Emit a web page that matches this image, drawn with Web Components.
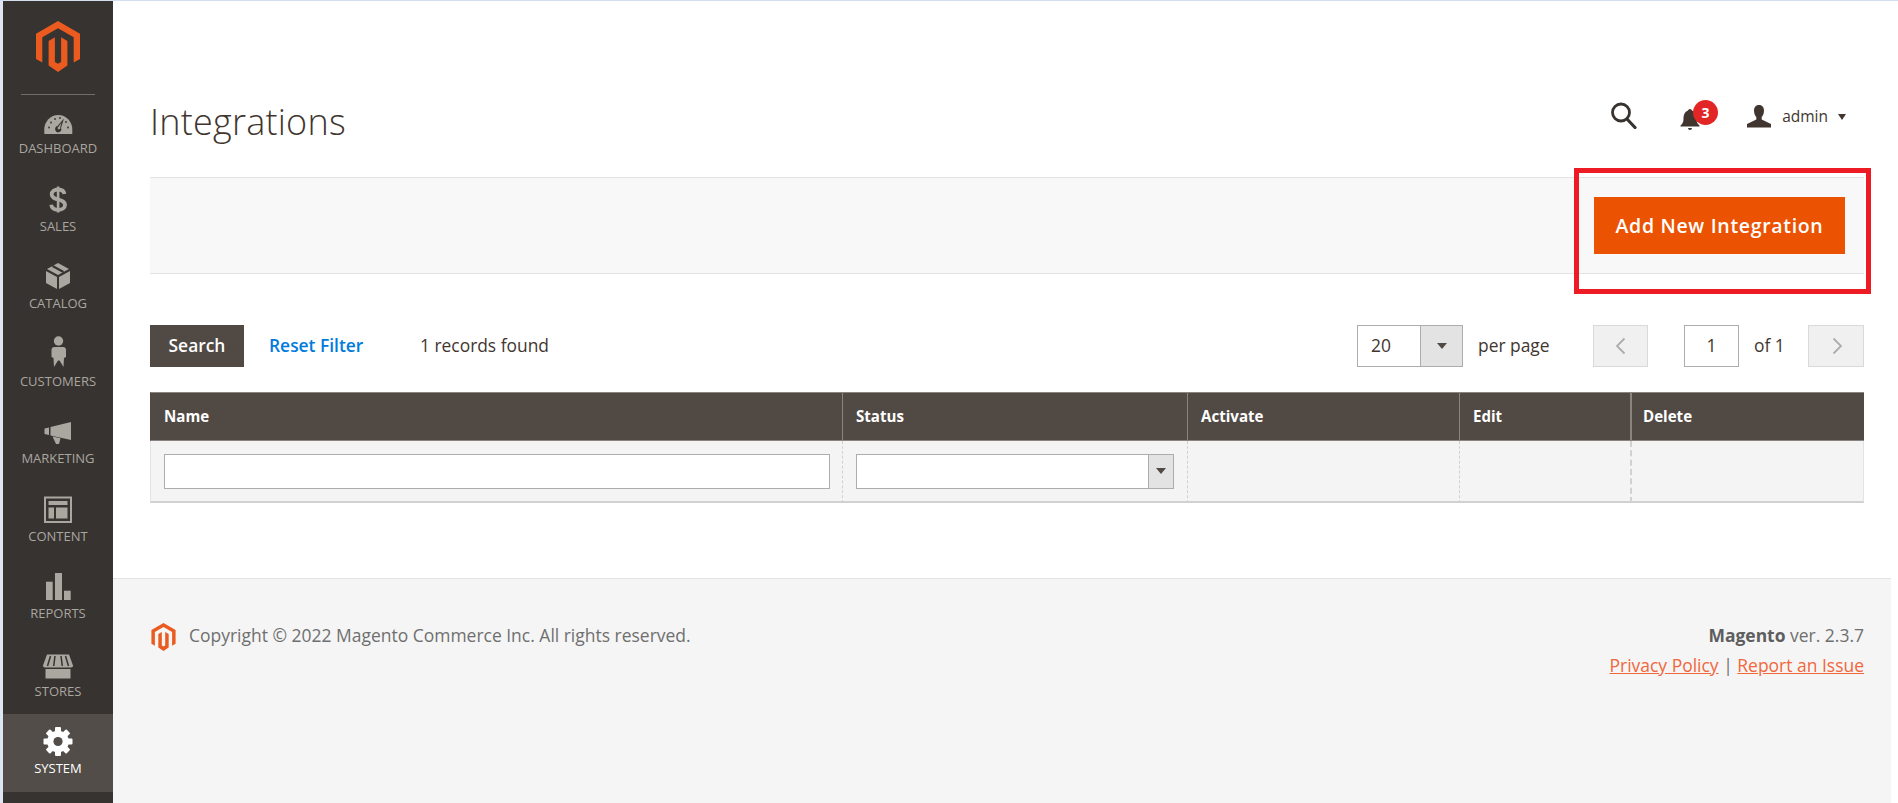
<!DOCTYPE html>
<html lang="en">
<head>
<meta charset="utf-8">
<title>Integrations</title>
<style>
html,body{margin:0;padding:0;height:100%;background:#fff;font-family:"Open Sans","Liberation Sans",sans-serif;color:#41362f}
</style>
</head>
<body>
<admin-shell>
  <admin-nav slot="nav">
    <nav-item label="Dashboard"><svg viewBox="0 0 40 40" width="40" height="40"><path fill="currentColor" d="M6.3 33v-4.5a14 14.5 0 0 1 28 0V33z"/><g fill="#373330"><circle cx="11" cy="26.5" r=".9"/><circle cx="13" cy="21.5" r=".9"/><circle cx="17" cy="18" r=".9"/><circle cx="22" cy="17" r=".9"/><circle cx="30" cy="26.5" r=".9"/><circle cx="28" cy="21" r=".9"/><path d="M17.5 29.5a3 3 0 0 1 2-4.5l6.5-7.5-3 9.5a3 3 0 0 1-5.5 2.500z"/></g><path fill="currentColor" d="M20.500 25.800l3-4-1.300 4.800a1.300 1.300 0 1 1-1.700-.8z"/></svg></nav-item>
    <nav-item label="Sales"><svg viewBox="0 0 40 40" width="40" height="40"><path fill="none" stroke="currentColor" stroke-width="3.800" d="M26.500 15c-.5-3-3-4.500-6.500-4.500s-6.300 1.800-6.300 5c0 6.500 13.300 3.500 13.300 10.500 0 3-3 4.800-6.800 4.800-3.700 0-6.500-1.700-7-5"/><rect x="18.800" y="7.500" width="2.600" height="26" fill="currentColor"/></svg></nav-item>
    <nav-item label="Catalog"><svg viewBox="0 0 40 40" width="40" height="40"><g fill="currentColor"><path d="M8 15l11 6v12L8 27z"/><path d="M32 15l-11 6v12l11-6z"/><path d="M20 7l11 6-11 6-11-6z"/></g><path stroke="#373330" stroke-width="2" d="M14.500 10l11 6"/></svg></nav-item>
    <nav-item label="Customers"><svg viewBox="0 0 40 40" width="40" height="40"><g fill="currentColor"><circle cx="20.500" cy="7" r="4.700"/><path d="M16 13h9q3 0 3 3v7l-2 1-.5 9-4-6.500h-1.500l-4 6.500-.5-9-2-1v-7q0-3 3-3z"/></g></svg></nav-item>
    <nav-item label="Marketing"><svg viewBox="0 0 40 40" width="40" height="40"><g fill="currentColor"><path d="M6.500 17.500l4.500-1v7.500l-4.500-1z"/><path d="M12.500 16L33 11v18l-20.500-4.500z"/><path d="M14.500 25.500l8 1.800-1.500 5.700h-3z"/></g></svg></nav-item>
    <nav-item label="Content"><svg viewBox="0 0 40 40" width="40" height="40"><rect x="7" y="8.500" width="26" height="24.500" fill="none" stroke="currentColor" stroke-width="2"/><g fill="currentColor"><rect x="10.500" y="12" width="19" height="4"/><rect x="10.500" y="18.500" width="5.500" height="11"/><rect x="18" y="18.500" width="11.500" height="11"/></g></svg></nav-item>
    <nav-item label="Reports"><svg viewBox="0 0 40 40" width="40" height="40"><g fill="currentColor"><rect x="8" y="15.700" width="6.700" height="18.300"/><rect x="17" y="7" width="7" height="27"/><rect x="26" y="24.700" width="6.700" height="9.300"/></g></svg></nav-item>
    <nav-item label="Stores"><svg viewBox="0 0 40 40" width="40" height="40"><g fill="currentColor"><path d="M9 10.500h22l4 11q.3 2-2 2H7q-2.300 0-2-2z"/><path d="M7.500 25h25v9.500h-25z"/></g><path stroke="#373330" stroke-width="1.500" fill="none" d="M12.500 12l-3 10M17 12l-1.300 10M23 12l1.300 10M27.500 12l3 10"/></svg></nav-item>
    <nav-item label="System" active><svg viewBox="0 0 40 40" width="40" height="40"><g fill="currentColor"><circle cx="20" cy="20.500" r="10.800"/><rect x="17" y="6" width="6" height="29" rx="1"/><rect x="17" y="6" width="6" height="29" rx="1" transform="rotate(45 20 20.500)"/><rect x="17" y="6" width="6" height="29" rx="1" transform="rotate(90 20 20.500)"/><rect x="17" y="6" width="6" height="29" rx="1" transform="rotate(135 20 20.500)"/></g><circle cx="20" cy="20.500" r="4.600" fill="#524d49"/></svg></nav-item>
  </admin-nav>

  <page-header heading="Integrations"></page-header>
  <action-bar>Add New Integration</action-bar>
  <grid-controls></grid-controls>
  <data-grid></data-grid>
  <page-footer slot="footer"></page-footer>
</admin-shell>

<template id="logo-tpl"><svg viewBox="0 0 44 51" width="100%" height="100%" style="display:block"><path fill="#eb5a1e" d="M22 0l22 12.700V38l-6.300 3.600V16.300L22 7.300 6.300 16.300v25.300L0 38V12.700z"/><path fill="#eb5a1e" d="M12.600 20l6.300-3.700V41l3.100 1.800 3.100-1.800V16.300l6.300 3.700v24.600L22 51l-9.400-6.400z"/></svg></template>

<script>
const logoMarkup = document.getElementById('logo-tpl').innerHTML;
class Base extends HTMLElement {
  constructor(){ super(); this.attachShadow({mode:'open'}); }
}
customElements.define('admin-shell', class extends Base {
  connectedCallback(){ this.shadowRoot.innerHTML = `<style>
    :host{display:flex;box-sizing:border-box;height:803px;overflow:hidden;border-top:1px solid #d3deee;padding-left:3px;background:linear-gradient(#dde6f2,#dde6f2) left/3px 100% no-repeat #fff}
    .nav{flex:0 0 110px;width:110px}
    .main{flex:1;min-width:0;display:flex;flex-direction:column;margin-right:7px;background:#fff}
    .content{padding:0 27px 0 37px}
    .foot{flex:1;display:flex;flex-direction:column}
  </style>
  <div class="nav"><slot name="nav"></slot></div>
  <div class="main"><div class="content"><slot></slot></div><div class="foot"><slot name="footer"></slot></div></div>`; }
});
customElements.define('admin-nav', class extends Base {
  connectedCallback(){ this.shadowRoot.innerHTML = `<style>
    :host{display:flex;flex-direction:column;height:100%;background:#373330}
    .logo{height:93px;box-sizing:border-box;padding:20px 0 0 33px}
    .logo div{width:44px;height:51px}
    .rule{height:1px;background:#736d68;margin:0 18px -1px}
  </style><div class="logo"><div>${logoMarkup}</div></div><div class="rule"></div><slot></slot>`; }
});
customElements.define('nav-item', class extends Base {
  connectedCallback(){ this.shadowRoot.innerHTML = `<style>
    :host{display:flex;flex-direction:column;align-items:center;box-sizing:border-box;height:77.5px;padding-top:7px;color:#aaa6a0;font-size:13px;line-height:14px;text-transform:uppercase}
    :host([active]){background:#524d49;color:#fff}
    ::slotted(svg){display:block;flex:none}
  </style><slot></slot><span>${this.getAttribute('label')}</span>`; }
});
customElements.define('page-header', class extends Base {
  connectedCallback(){ this.shadowRoot.innerHTML = `<style>
    :host{display:flex;height:176px;box-sizing:border-box;justify-content:space-between;align-items:flex-start}
    h1{margin:97px 0 0;font-weight:300;font-size:36px;letter-spacing:.22px;line-height:48px;color:#41362f}
    .actions{display:flex;align-items:flex-start;margin:102px 18px 0 0}
    .s{margin:-1px 43px 0 0}
    .bell{position:relative;width:40px;height:28px;margin-right:27px}
    .badge{position:absolute;left:13px;top:-3px;width:25px;height:25px;border-radius:50%;background:#e22626;color:#fff;font-weight:700;font-size:14px;line-height:25px;text-align:center}
    .user{margin-right:11px;display:block}
    .name{font-size:15.500px;line-height:20px;margin-top:3px;color:#41362f}
    .caret{margin:11px 0 0 10px;width:0;height:0;border:4.500px solid transparent;border-top:6px solid #41362f;border-bottom:0}
  </style><h1>${this.getAttribute('heading')}</h1>
  <div class="actions">
    <svg class="s" width="27" height="27" viewBox="0 0 27 27"><circle cx="11" cy="10.500" r="8.500" fill="none" stroke="#373330" stroke-width="2.800"/><path d="M17 17l8 8.500" stroke="#373330" stroke-width="3.200" stroke-linecap="round"/></svg>
    <div class="bell"><svg width="22" height="24" viewBox="0 0 22 24" style="position:absolute;left:0;top:5px"><path fill="#41362f" d="M10 1a2 2 0 0 1 2 1.500C16 4 16.500 8 16.500 11c0 3 1 5 3 6.500v1H.5v-1c2-1.500 3-3.500 3-6.500C3.500 8 4 4 8 2.500A2 2 0 0 1 10 1zM8 20h4a2 2 0 0 1-4 0z"/></svg><span class="badge">3</span></div>
    <svg class="user" width="24" height="23" viewBox="0 0 24 23" style="margin-top:2px"><path fill="#41362f" d="M12 0c3.500 0 5 2.500 5 5.500 0 2.500-.8 5-2.300 6.500v2.500L24 19v3.500H0V19l9.300-4.500V12C7.800 10.500 7 8 7 5.500 7 2.500 8.500 0 12 0z"/></svg>
    <span class="name">admin</span><span class="caret"></span>
  </div>`; }
});
customElements.define('action-bar', class extends Base {
  connectedCallback(){ this.shadowRoot.innerHTML = `<style>
    :host{display:flex;position:relative;justify-content:flex-end;box-sizing:border-box;height:97px;padding:19px 19px 0 0;background:#f8f8f8;border-top:1px solid #e3e3e3;border-bottom:1px solid #e3e3e3}
    button{all:unset;box-sizing:border-box;width:251px;height:57px;background:#eb5202;color:#fff;font:600 19.500px/57px "Open Sans","Liberation Sans",sans-serif;letter-spacing:.68px;text-align:center}
    .mark{position:absolute;right:-7px;top:-10px;width:297px;height:126px;box-sizing:border-box;border:5px solid #ed1c24;pointer-events:none}
  </style><button><slot></slot></button><div class="mark"></div>`; }
});
customElements.define('grid-controls', class extends Base {
  connectedCallback(){ this.shadowRoot.innerHTML = `<style>
    :host{display:flex;align-items:center;margin-top:51px;height:42px;font-size:17.400px;color:#41362f}
    .search{width:94px;height:42px;background:#514943;color:#fff;font-weight:600;line-height:40px;text-align:center}
    .reset{margin:-2px 0 0 25px;color:#007bdb;font-weight:600;width:151px}
    .rec{margin-top:-2px}
    .right{display:flex;align-items:center;margin-left:auto}
    .sel{display:flex;box-sizing:border-box;width:106px;height:42px;border:1px solid #adadad;background:#fff;line-height:38px}
    .sel span{flex:1;padding-left:13px}
    .sel i{flex:0 0 41px;border-left:1px solid #adadad;background:#e3e3e3;display:flex;align-items:center;justify-content:center}
    .caret{width:0;height:0;border:5px solid transparent;border-top:6px solid #514943;border-bottom:0}
    .per{margin:-2px 0 0 15px;width:115px}
    .btn{box-sizing:border-box;width:55px;height:42px;border:1px solid #d9d9d9;background:#f0f0f0;display:flex;align-items:center;justify-content:center}
    .btn.next{width:56px}
    .btn.next svg{margin-left:3px}
    .page{box-sizing:border-box;width:55px;height:42px;border:1px solid #adadad;margin-left:36px;text-align:center;line-height:38px}
    .of{margin:-2px 0 0 15px;width:54px}
  </style>
  <span class="search">Search</span><span class="reset">Reset Filter</span><span class="rec">1 records found</span>
  <div class="right">
    <div class="sel"><span>20</span><i><b class="caret"></b></i></div><span class="per">per page</span>
    <div class="btn"><svg width="11" height="18" viewBox="0 0 11 18"><path d="M9.500 1.500L2 9l7.500 7.500" fill="none" stroke="#adadad" stroke-width="1.800"/></svg></div>
    <div class="page">1</div><span class="of">of 1</span>
    <div class="btn next"><svg width="11" height="18" viewBox="0 0 11 18"><path d="M1.500 1.500L9 9l-7.500 7.500" fill="none" stroke="#adadad" stroke-width="1.800"/></svg></div>
  </div>`; }
});
customElements.define('data-grid', class extends Base {
  connectedCallback(){ this.shadowRoot.innerHTML = `<style>
    :host{display:block;margin-top:25px;margin-bottom:75px}
    table{border-collapse:separate;border-spacing:0;table-layout:fixed;width:100%}
    th{box-sizing:border-box;height:49px;background:#514943;color:#fff;font-size:15.100px;font-weight:700;text-align:left;padding:0 13px 2px;border-top:1px solid #8a837f;border-bottom:1px solid #8a837f;border-left:1px solid #8a837f}
    th:first-child{border-left:1px solid #514943}
    th:last-child{border-left-width:2px;padding-left:11px}
    td{box-sizing:border-box;height:62px;background:#f4f4f4;padding:0 12px 0 13px;border-left:1px dashed #d1d1d1;border-bottom:2px solid #d1d1d1}
    td:first-child{border-left:1px solid #e3e3e3}
    td:nth-child(2){padding-right:13px}
    td:last-child{border-left:2px dashed #d1d1d1;border-right:1px solid #e3e3e3}
    .in{box-sizing:border-box;display:block;width:100%;height:35px;border:1px solid #adadad;background:#fff;margin:0;padding:0}
    .se{display:flex;box-sizing:border-box;height:35px;border:1px solid #adadad;background:#fff}
    .se i{margin-left:auto;flex:0 0 24px;border-left:1px solid #adadad;background:#e3e3e3;display:flex;align-items:center;justify-content:center}
    .caret{width:0;height:0;border:5px solid transparent;border-top:6px solid #514943;border-bottom:0}
  </style>
  <table><colgroup><col style="width:692px"><col style="width:345px"><col style="width:272px"><col style="width:171px"><col style="width:234px"></colgroup>
  <thead><tr><th>Name</th><th>Status</th><th>Activate</th><th>Edit</th><th>Delete</th></tr></thead>
  <tbody><tr><td><input class="in" aria-label="Name"></td><td><div class="se"><i><b class="caret"></b></i></div></td><td></td><td></td><td></td></tr></tbody></table>`; }
});
customElements.define('page-footer', class extends Base {
  connectedCallback(){ this.shadowRoot.innerHTML = `<style>
    :host{display:flex;flex:1;justify-content:space-between;align-items:flex-start;box-sizing:border-box;padding:41px 27px 0 37px;background:#f5f5f5;border-top:1px solid #e3e3e3;font-size:17.480px;color:#6f6f6f}
    .left{display:flex;align-items:center;height:30px}
    .logo{width:25px;height:28px;margin:3px 13px 0 1px}
    .right{text-align:right;line-height:30px}
    b{font-weight:700;color:#5e5e5e}
    a{color:#f1673b;text-decoration:underline}
  </style>
  <div class="left"><div class="logo">${logoMarkup}</div><span>Copyright © 2022 Magento Commerce Inc. All rights reserved.</span></div>
  <div class="right"><div><b>Magento</b> ver. 2.3.7</div><div><a href="#">Privacy Policy</a> | <a href="#">Report an Issue</a></div></div>`; }
});
</script>
</body>
</html>
